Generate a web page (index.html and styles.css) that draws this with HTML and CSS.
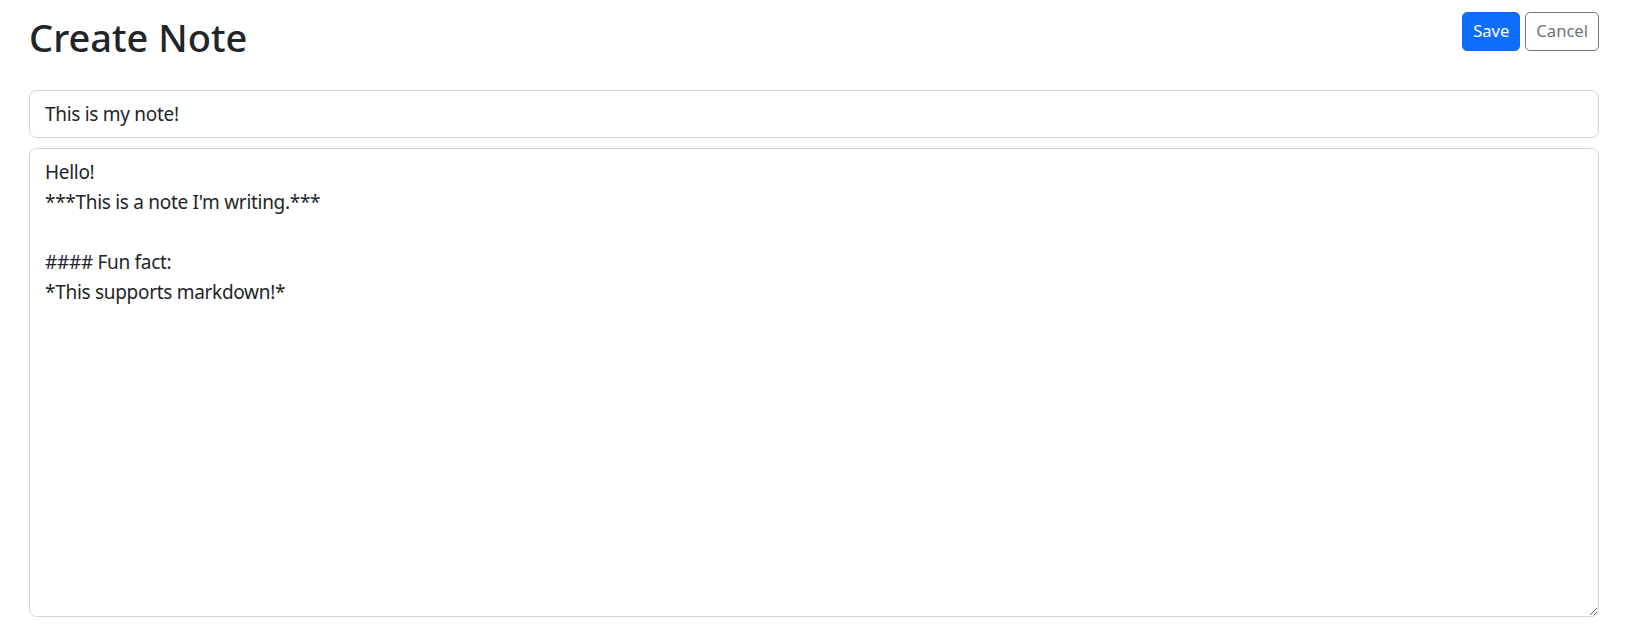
FILE: index.html
```html
<!DOCTYPE html>
<html lang="en">
<head>
<meta charset="utf-8">
<title>Create Note</title>
<link rel="stylesheet" href="styles.css">
</head>
<body>
<main class="page">
  <header class="page-header">
    <h2 class="title">Create Note</h2>
    <div class="actions">
      <button class="btn btn-primary" type="button">Save</button>
      <button class="btn btn-outline" type="button">Cancel</button>
    </div>
  </header>
  <form class="note-form">
    <input class="field field-title" type="text" value="This is my note!">
    <textarea class="field field-body">Hello!
***This is a note I'm writing.***

#### Fun fact:
*This supports markdown!*</textarea>
  </form>
</main>
</body>
</html>
```
FILE: styles.css
```css
html, body {
  margin: 0;
  background: #fff;
}
body {
  font-family: "Noto Sans", "Open Sans", sans-serif;
  color: #212529;
}
.page {
  padding: 12px 37px 0 29px;
}
.page-header {
  display: flex;
  justify-content: space-between;
  align-items: flex-start;
  height: 78px;
}
.title {
  margin: 1px 0 0;
  font-size: 38px;
  font-weight: 500;
  line-height: 48px;
  color: #212529;
}
.actions {
  display: flex;
  gap: 5px;
}
.btn {
  font-family: inherit;
  font-size: 16.6px;
  line-height: 26.75px;
  padding: 5px 10px;
  border-radius: 5px;
  border: 1px solid transparent;
  cursor: pointer;
}
.btn-primary {
  background: #0d6efd;
  border-color: #0d6efd;
  color: #fff;
}
.btn-outline {
  background: #fff;
  border-color: #6c757d;
  color: #6c757d;
}
.note-form {
  display: flex;
  flex-direction: column;
  gap: 10px;
}
.field {
  display: block;
  box-sizing: border-box;
  width: 100%;
  margin: 0;
  font-family: inherit;
  font-size: 19px;
  letter-spacing: -0.3px;
  line-height: 30px;
  color: #212529;
  background: #fff;
  border: 1px solid #ced4da;
  border-radius: 7.5px;
  padding: 7.5px 15px;
  outline: none;
}
.field-title {
  height: 48px;
}
.field-body {
  height: 469px;
  resize: vertical;
}
```
